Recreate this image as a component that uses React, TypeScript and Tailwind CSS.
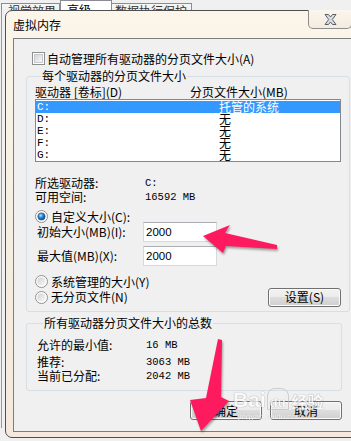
import React from 'react'

function CheckBox() {
  return (
    <div className="w-[13px] h-[13px] shrink-0 border border-[#8e8f8f] bg-white p-[1px]">
      <div className="w-full h-full border border-[#c6c9cd] bg-gradient-to-br from-[#d6d6d6] to-[#f6f6f6]" />
    </div>
  )
}

function Radio({ checked }: { checked?: boolean }) {
  return (
    <svg width="13" height="13" viewBox="0 0 13 13" className="shrink-0">
      <defs>
        <linearGradient id="rgray" x1="0" y1="0" x2="1" y2="1">
          <stop offset="0" stopColor="#d2d2d2" />
          <stop offset="1" stopColor="#f8f8f8" />
        </linearGradient>
        <radialGradient id="rblue" cx="0.38" cy="0.35" r="0.7">
          <stop offset="0" stopColor="#b9e4ff" />
          <stop offset="0.45" stopColor="#2b8ad6" />
          <stop offset="1" stopColor="#0b3f7a" />
        </radialGradient>
      </defs>
      <circle cx="6.5" cy="6.5" r="6" fill="#ffffff" stroke="#8e8f8f" />
      <circle cx="6.5" cy="6.5" r="4.3" fill="url(#rgray)" />
      {checked && <circle cx="6.5" cy="6.5" r="3.6" fill="url(#rblue)" stroke="#1a4f8a" strokeWidth="0.6" />}
    </svg>
  )
}

function Btn({ label, w }: { label: string; w: string }) {
  return (
    <button
      className={`${w} h-[19px] shrink-0 rounded-[3px] border border-[#707070] bg-[linear-gradient(#f2f2f2,#ebebeb_50%,#dddddd_50%,#cfcfcf)] shadow-[inset_0_0_0_1px_#fbfbfb] text-[12px] leading-[12px] text-black flex items-center justify-center`}
    >
      {label}
    </button>
  )
}

function TextBox({ value }: { value: string }) {
  return (
    <div className="w-[74px] h-[20px] border border-[#d6dae0] border-t-[#abadb3] bg-white pl-[2px] flex items-center font-['Liberation_Sans',sans-serif] text-[11.5px] leading-[12px]">
      {value}
    </div>
  )
}

const drives = [
  { d: 'C:', v: '托管的系统', sel: true },
  { d: 'D:', v: '无' },
  { d: 'E:', v: '无' },
  { d: 'F:', v: '无' },
  { d: 'G:', v: '无' },
]

export default function App() {
  return (
    <div className="relative w-[351px] h-[441px] overflow-hidden bg-[#f0f0f0] font-['Noto_Sans_CJK_SC',sans-serif] text-[12px] leading-[12px] text-black">
      {/* parent window tabs */}
      <div className="flex h-[10px] overflow-hidden pl-[1px]">
        <div className="w-[59px] h-[20px] mt-[3px] shrink-0 border border-[#898c95] bg-gradient-to-b from-[#f6f6f6] to-[#e6e6e6] pl-[6px] pt-[1px] text-[#333]">视觉效果</div>
        <div className="w-[52px] h-[20px] shrink-0 border border-[#898c95] bg-white pl-[6px] pt-[3px]">高级</div>
        <div className="w-[80px] h-[20px] mt-[3px] shrink-0 border border-l-0 border-[#898c95] bg-gradient-to-b from-[#f6f6f6] to-[#e6e6e6] pl-[3px] pt-[1px] text-[#333]">数据执行保护</div>
      </div>

      <div className="flex">
        <div className="ml-[1px] w-[4px] h-[418px] shrink-0 border-l border-[#9a9a9a]" />

        {/* dialog */}
        <div className="w-[360px] shrink-0 rounded-[7px] border border-[#4f4f4f] bg-gradient-to-b from-[#fbf5ea] via-[#f6eee2] to-[#f4e9dc] flex flex-col pb-[5px]">
          <div className="h-[27px] flex items-start pl-[7px] pr-[12px]">
            <span className="mt-[8px] [text-shadow:0_0_4px_#ffffff]">虚拟内存</span>
            <div className="ml-auto -mt-[1px] w-[44px] h-[19px] rounded-b-[5px] border border-t-0 border-[#8d8d8d] bg-gradient-to-b from-[#fbf6ee] to-[#f3ebdf] flex items-center justify-center">
              <svg width="13" height="11" viewBox="0 0 13 11">
                <path d="M1 0.5 H4.5 L6.5 3 L8.5 0.5 H12 L8.3 5.5 L12 10.5 H8.5 L6.5 8 L4.5 10.5 H1 L4.7 5.5 Z" fill="#d9dde3" stroke="#5b6068" strokeWidth="1" strokeLinejoin="round" />
              </svg>
            </div>
          </div>

          {/* client area */}
          <div className="mx-[7px] border border-[#7d7d7d] bg-[#f0f0f0] flex flex-col pb-[11px]">
            <div className="mt-[13px] ml-[18px] h-[13px] flex items-center gap-[2px]">
              <CheckBox />
              <span>自动管理所有驱动器的分页文件大小(A)</span>
            </div>

            <fieldset className="mt-[4px] ml-[12px] w-[316px] rounded-[3px] border border-[#d5dfe5] pl-[8px] pr-[8px] pb-[5px]">
              <legend className="ml-[6px] px-[1px] h-[14px] leading-[14px]">每个驱动器的分页文件大小</legend>
              <div className="mt-[3px] h-[12px] flex">
                <span className="w-[155px]">驱动器 [卷标](D)</span>
                <span>分页文件大小(MB)</span>
              </div>
              <div className="mt-[1px] w-[306px] h-[63px] border border-[#828790] bg-white pt-[1px]">
                {drives.map(r => (
                  <div key={r.d} className={`h-[12px] flex items-center ${r.sel ? 'bg-[#3399ff] text-white' : ''}`}>
                    <span className="w-[183px] pl-[1px] font-['Liberation_Mono',monospace] text-[11px]">{r.d}</span>
                    <span>{r.v}</span>
                  </div>
                ))}
              </div>

              <div className="mt-[14px] h-[14px] flex items-center">
                <span className="w-[110px]">所选驱动器:</span>
                <span className="font-['Liberation_Mono',monospace] text-[10.5px]">C:</span>
              </div>
              <div className="h-[14px] flex items-center">
                <span className="w-[110px]">可用空间:</span>
                <span className="font-['Liberation_Mono',monospace] text-[10.5px]">16592 MB</span>
              </div>

              <div className="mt-[6px] h-[13px] flex items-center gap-[3px]">
                <Radio checked />
                <span>自定义大小(C):</span>
              </div>
              <div className="-mt-[1px] h-[20px] flex items-center">
                <span className="w-[108px] pl-[2px]">初始大小(MB)(I):</span>
                <TextBox value="2000" />
              </div>
              <div className="mt-[4px] h-[20px] flex items-center">
                <span className="w-[108px] pl-[2px]">最大值(MB)(X):</span>
                <TextBox value="2000" />
              </div>

              <div className="mt-[9px] h-[13px] flex items-center gap-[3px]">
                <Radio />
                <span>系统管理的大小(Y)</span>
              </div>
              <div className="h-[18px] flex items-center gap-[3px]">
                <Radio />
                <span>无分页文件(N)</span>
                <div className="ml-auto">
                  <Btn label="设置(S)" w="w-[73px]" />
                </div>
              </div>
            </fieldset>

            <fieldset className="mt-[4px] ml-[12px] w-[316px] rounded-[3px] border border-[#d5dfe5] pl-[10px] pb-[7px]">
              <legend className="ml-[6px] px-[1px] h-[14px] leading-[14px]">所有驱动器分页文件大小的总数</legend>
              <div className="mt-[8px] h-[14px] flex items-center">
                <span className="w-[109px]">允许的最小值:</span>
                <span className="font-['Liberation_Mono',monospace] text-[10.5px]">16 MB</span>
              </div>
              <div className="mt-[3px] h-[14px] flex items-center">
                <span className="w-[109px]">推荐:</span>
                <span className="font-['Liberation_Mono',monospace] text-[10.5px]">3063 MB</span>
              </div>
              <div className="h-[14px] flex items-center">
                <span className="w-[109px]">当前已分配:</span>
                <span className="font-['Liberation_Mono',monospace] text-[10.5px]">2042 MB</span>
              </div>
            </fieldset>

            <div className="mt-[10px] pl-[176px] flex gap-[8px]">
              <Btn label="确定" w="w-[72px]" />
              <Btn label="取消" w="w-[72px]" />
            </div>
          </div>
        </div>
      </div>

      {/* baidu watermark */}
      <div className="absolute left-[233px] top-[388px] pointer-events-none flex flex-col items-start opacity-70">
        <div className="flex items-end text-white [text-shadow:0_0_1px_#8a8a8a,0_0_1px_#8a8a8a]">
          <span className="font-['Liberation_Sans',sans-serif] font-bold text-[21px] leading-[21px]">Bai</span>
          <span className="ml-[1px] rounded-t-[8px] border border-[#bdbdbd] px-[2px] pt-[8px] font-['Liberation_Sans',sans-serif] font-bold text-[13px] leading-[12px]">du</span>
          <span className="ml-[3px] font-bold text-[16px] leading-[18px]">经验</span>
        </div>
        <span className="ml-[5px] mt-[3px] font-['Liberation_Sans',sans-serif] text-[8px] leading-[8px] text-white [text-shadow:0_0_1px_#9a9a9a]">jingyan.baidu.com</span>
      </div>

      {/* red arrows */}
      <svg className="absolute left-0 top-0 pointer-events-none drop-shadow-[1px_2px_1px_rgba(0,0,0,0.35)]" width="351" height="441" viewBox="0 0 351 441">
        <polygon points="203,236 230,225 225,233 277,245 277,249 226,246 223,253" fill="#fe1a5e" />
        <polygon points="218,339 222,340 221,397 229,401 201,431 190,400 206,398" fill="#fe1a5e" />
      </svg>
    </div>
  )
}
